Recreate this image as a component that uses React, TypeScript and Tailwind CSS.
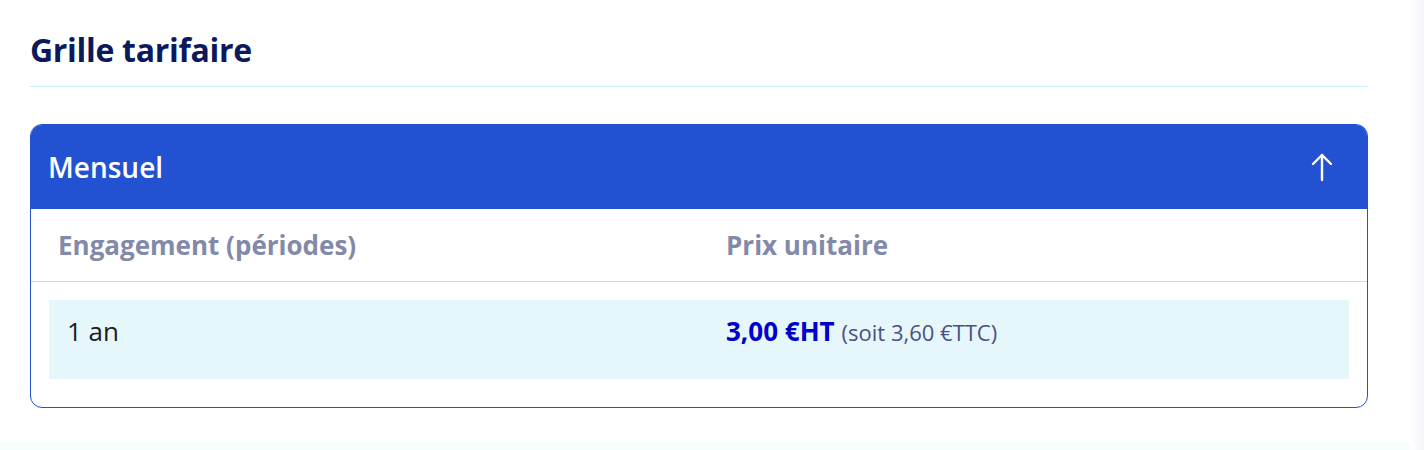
import React from 'react';

const ArrowUp = () => (
  <svg width="22" height="30" viewBox="0 0 22 30" fill="none" stroke="white" strokeWidth="2.4" strokeLinecap="round" strokeLinejoin="round">
    <path d="M11 28V3" />
    <path d="M2 12L11 3L20 12" />
  </svg>
);

const App = () => {
  return (
    <div className="relative w-[1424px] h-[450px] bg-white overflow-hidden" style={{ fontFamily: '"Open Sans", "Noto Sans", sans-serif' }}>
      <section className="pl-[30px] pr-[56px] pt-[30px]">
        <h2 className="text-[32px] font-bold text-[#0b1a5c] leading-[40px] pb-[16px] border-b border-[#c9f1fb] tracking-[-0.3px]">Grille tarifaire</h2>

        <div className="mt-[37px] border border-[#2251d1] rounded-[12px] overflow-hidden">
          <div className="h-[84px] bg-[#2251d1] flex items-center justify-between pl-[17px] pr-[34px]">
            <span className="text-white text-[28px] leading-[36px] font-semibold">Mensuel</span>
            <ArrowUp />
          </div>

          <div className="px-[18px] pb-[28px]">
            <div className="grid grid-cols-[677px_1fr] h-[73px] pt-[18px] border-b border-[#d6d7e0] -mx-[18px] px-[18px]">
              <span className="pl-[9px] text-[26px] leading-[36px] font-bold text-[#8289a9]">Engagement (périodes)</span>
              <span className="text-[26px] leading-[36px] font-bold text-[#8289a9]">Prix unitaire</span>
            </div>
            <div className="mt-[18px] grid grid-cols-[677px_1fr] h-[79px] pt-[13px] bg-[#e6f7fc]">
              <span className="pl-[18px] text-[26px] leading-[36px] text-[#1c1c24]">1 an</span>
              <span className="flex items-baseline gap-[7px] leading-[36px]">
                <span className="text-[26px] font-bold text-[#0000cd]">3,00 €HT</span>
                <span className="text-[22px] text-[#4b5083]">(soit 3,60 €TTC)</span>
              </span>
            </div>
          </div>
        </div>
      </section>
      <div className="absolute left-0 right-0 bottom-0 h-[7px] bg-[#f5fdff]" />
      <div className="absolute top-0 bottom-0 right-0 w-[14px] bg-gradient-to-r from-white to-[#f4f5f9]" />
    </div>
  );
};

export default App;
